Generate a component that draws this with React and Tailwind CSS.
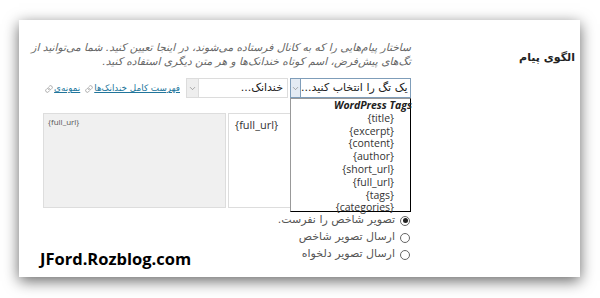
import { ChevronDown, Link } from "lucide-react";

const FA = "font-['DejaVu_Sans',sans-serif]";

const TAGS = ["{title}", "{excerpt}", "{content}", "{author}", "{short_url}", "{full_url}", "{tags}", "{categories}"];

const RADIOS = [
  { label: "تصویر شاخص را نفرست.", checked: true },
  { label: "ارسال تصویر شاخص", checked: false },
  { label: "ارسال تصویر دلخواه", checked: false },
];

function SelectBox({ width, text, focused }) {
  return (
    <div
      className={`flex h-[20px] shrink-0 items-stretch border bg-white ${
        focused ? "border-[#7f9db9]" : "border-[#dcdcdc]"
      }`}
      style={{ width }}
      dir="ltr"
    >
      <div
        className={`flex w-[12px] items-center justify-center border-r ${
          focused ? "border-[#7f9db9] bg-[#e4ebf3]" : "border-[#dcdcdc] bg-[#eeeeee]"
        }`}
      >
        <ChevronDown size={9} strokeWidth={1.6} className="text-[#777]" />
      </div>
      <div className={`flex flex-1 items-center justify-end pr-[4px] text-[11px] text-[#222] ${FA}`} dir="rtl">
        <span className="w-full truncate text-right">{text}</span>
      </div>
    </div>
  );
}

function Radio({ checked }) {
  return (
    <span className="flex h-[10px] w-[10px] items-center justify-center rounded-full border border-[#666] bg-white">
      {checked ? <span className="h-[5px] w-[5px] rounded-full bg-[#222]" /> : null}
    </span>
  );
}

export default function App() {
  return (
    <div className="h-[298px] w-[600px] overflow-hidden bg-white pl-[19px] pt-[20px]">
      <div className="flex h-[257px] w-[561px] flex-row-reverse bg-white shadow-[0_4px_14px_rgba(0,0,0,0.6)]">
        {/* label column */}
        <div className="w-[168px] shrink-0 pr-[5px] pt-[23px]" dir="rtl">
          <span className={`text-[11px] font-bold text-[#222] ${FA}`}>الگوی پیام</span>
        </div>

        {/* main column */}
        <div className="relative w-[393px] shrink-0">
          <div className={`pt-[21px] pr-[1px] text-right text-[10.7px] italic leading-[14px] text-[#666] ${FA}`} dir="rtl">
            <div className="whitespace-nowrap">
              ساختار پیام‌هایی را که به کانال فرستاده می‌شوند، در اینجا تعیین کنید. شما می‌توانید از
            </div>
            <div className="whitespace-nowrap">
              تگ‌های پیش‌فرض، اسم کوتاه خندانک‌ها و هر متن دیگری استفاده کنید.
            </div>
          </div>

          <div className="mt-[9px] flex flex-row-reverse items-center pr-[1px]">
            <SelectBox width={121} text="یک تگ را انتخاب کنید..." focused />
            <div className="w-[2px]" />
            <SelectBox width={102} text="خندانک..." />
            <div className={`mr-[6px] flex items-center gap-[5px] pt-[2px] text-[8.8px] text-[#21759b] ${FA}`} dir="ltr">
              <span className="flex items-center gap-[1px]">
                <Link size={8} strokeWidth={2} className="text-[#888]" />
                <span className="underline">نمونه‌ی</span>
              </span>
              <span className="flex items-center gap-[1px]">
                <Link size={8} strokeWidth={2} className="text-[#888]" />
                <span className="underline">فهرست کامل خندانک‌ها</span>
              </span>
            </div>
          </div>

          <div className="relative">
            <div className="mt-[15px] flex pl-[24px]">
              <div className="h-[95px] w-[183px] border border-[#dddddd] bg-[#f0f0f0] px-[4px] pt-[2px] font-['Open_Sans',sans-serif] text-[8px] text-[#555]">
                {"{full_url}"}
              </div>
              <div className="ml-[2px] h-[95px] w-[100px] border border-[#dddddd] bg-white px-[6px] pt-[3px] font-['Open_Sans',sans-serif] text-[11px] text-[#333]">
                {"{full_url}"}
              </div>
            </div>

            <div className="flex items-end justify-between pl-[21px] pr-[2px] pt-[4px]">
              <div className="-mb-[6px] font-['Open_Sans',sans-serif] text-[16.5px] font-bold leading-[20px] text-black">
                JFord.Rozblog.com
              </div>
              <div className="flex flex-col items-end" dir="ltr">
                {RADIOS.map((r) => (
                  <div key={r.label} className="flex h-[17px] items-center gap-[5px]">
                    <span className={`text-[11px] text-[#555] ${FA}`} dir="rtl">
                      {r.label}
                    </span>
                    <Radio checked={r.checked} />
                  </div>
                ))}
              </div>
            </div>

            {/* open dropdown list */}
            <div className="absolute right-[1px] top-[-15px] h-[114px] w-[121px] border border-l-[#999] border-t-[#999] border-r-black border-b-black bg-white pr-[16px] font-['Open_Sans',sans-serif] text-[10.5px] leading-[12.8px] text-[#333]">
              <div className="-mr-[18px] whitespace-nowrap text-right font-bold italic text-[#222]">WordPress Tags</div>
              {TAGS.map((t) => (
                <div key={t} className="text-right">
                  {t}
                </div>
              ))}
            </div>
          </div>
        </div>
      </div>
    </div>
  );
}
